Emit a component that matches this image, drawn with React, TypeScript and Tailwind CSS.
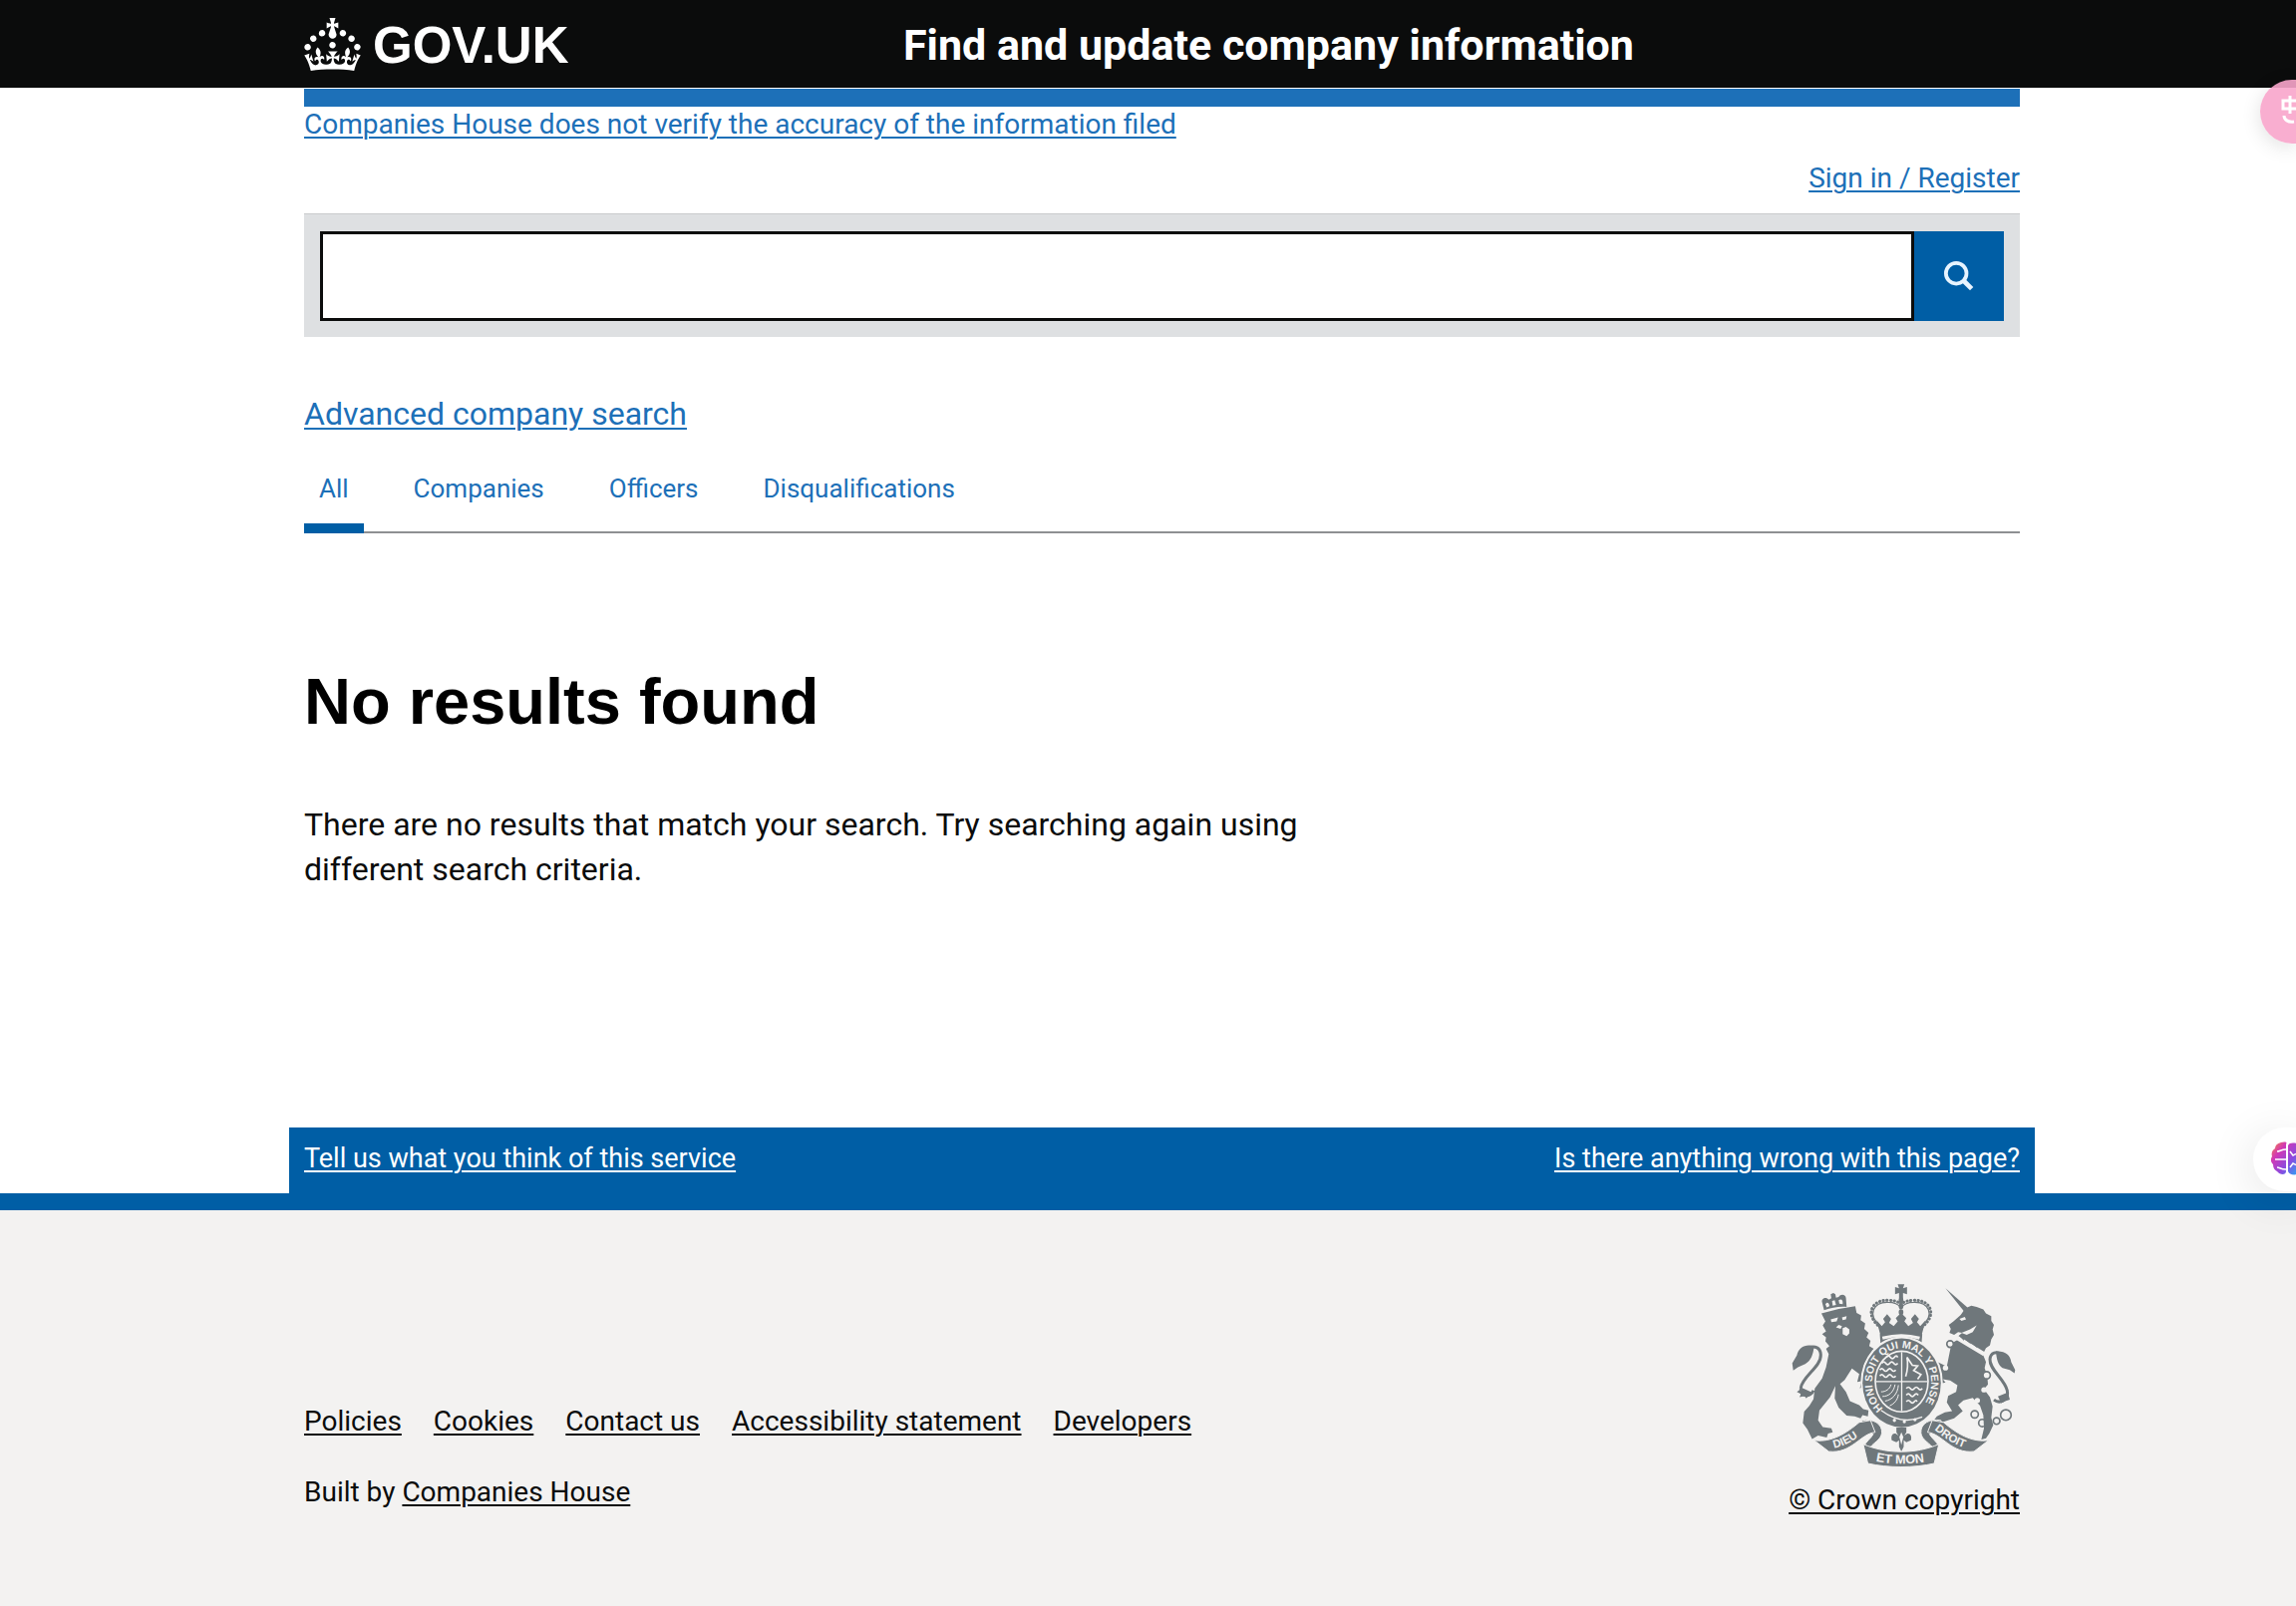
import type { ReactNode } from "react";

const tabs = ["All", "Companies", "Officers", "Disqualifications"];

const footerLinks = [
  "Policies",
  "Cookies",
  "Contact us",
  "Accessibility statement",
  "Developers",
];

/** Centred page column shared by the header, the main content and the footer. */
function Container({ children, className = "" }: { children: ReactNode; className?: string }) {
  return (
    <div className="pl-7">
      <div className={"mx-auto w-full max-w-[1721px] " + className}>{children}</div>
    </div>
  );
}

function CrownIcon() {
  return (
    <svg viewBox="0 0 32 30" className="h-[53px] w-[57px]" fill="currentColor" aria-hidden="true">
      <path d="M22.6 10.4c-1 .4-2-.1-2.4-1-.4-.9.1-2 1-2.4.9-.4 2 .1 2.4 1s-.1 2-1 2.4m-5.9 6.7c-.9.4-2-.1-2.4-1-.4-.9.1-2 1-2.4.9-.4 2 .1 2.4 1s-.1 2-1 2.4m10.8-3.7c-1 .4-2-.1-2.4-1-.4-.9.1-2 1-2.4.9-.4 2 .1 2.4 1s0 2-1 2.4m3.3 4.8c-1 .4-2-.1-2.4-1-.4-.9.1-2 1-2.4.9-.4 2 .1 2.4 1s-.1 2-1 2.4M17 4.7l2.3 1.2V2.5l-2.3.7-.2-.2.9-3h-3.4l.9 3-.2.2c-.1.1-2.3-.7-2.3-.7v3.4L15 4.7c.1.1.1.2.2.2l-1.3 4c-.1.2-.1.4-.1.6 0 1.1.8 2 1.9 2.2h.7c1-.2 1.9-1.1 1.9-2.1 0-.2 0-.4-.1-.6l-1.3-4c-.1-.2 0-.2.1-.3m-7.6 5.7c.9.4 2-.1 2.4-1 .4-.9-.1-2-1-2.4-.9-.4-2 .1-2.4 1s0 2 1 2.4m-5 3c.9.4 2-.1 2.4-1 .4-.9-.1-2-1-2.4-.9-.4-2 .1-2.4 1s.1 2 1 2.4m-3.2 4.8c.9.4 2-.1 2.4-1 .4-.9-.1-2-1-2.4-.9-.4-2 .1-2.4 1s0 2 1 2.4m14.8 11c4.4 0 8.6.3 12.3.8 1.1-4.5 2.4-7 3.7-8.8l-2.5-.9c.2 1.3.3 1.9 0 2.7-.4-.4-.8-1.1-1.1-2.3l-1.2 4c.7-.5 1.3-.8 2-.9-1.1 2.5-2.6 3.1-3.5 3-1.1-.2-1.7-1.2-1.5-2.1.3-1.2 1.5-1.5 2.1-.1 1.1-2.3-.8-3-2-2.3 1.9-1.9 2.1-3.5.6-5.6-2.1 1.6-2.1 3.2-1.2 5.5-1.2-1.4-3.2-.6-2.5 1.6.9-1.4 2.1-.5 1.9.8-.2 1.1-1.7 2.1-3.5 1.9-2.7-.2-2.9-2.1-2.9-3.6.7-.1 1.9.5 2.9 1.9l.4-4.3c-1.1 1.1-2.1 1.4-3.2 1.4.4-1.2 2.1-3 2.1-3h-5.4s1.7 1.9 2.1 3c-1.1 0-2.1-.2-3.2-1.4l.4 4.3c1-1.4 2.2-2 2.9-1.9-.1 1.5-.2 3.4-2.9 3.6-1.9.2-3.4-.8-3.5-1.9-.2-1.3 1-2.2 1.9-.8.7-2.3-1.2-3-2.5-1.6.9-2.2.9-3.9-1.2-5.5-1.5 2-1.3 3.7.6 5.6-1.2-.7-3.1 0-2 2.3.6-1.4 1.8-1.1 2.1.1.2.9-.3 1.9-1.5 2.1-.9.2-2.4-.5-3.5-3 .6 0 1.2.3 2 .9l-1.2-4c-.3 1.1-.7 1.9-1.1 2.3-.3-.8-.2-1.4 0-2.7l-2.9.9C1.3 23 2.6 25.5 3.7 30c3.7-.5 7.9-.8 12.3-.8" />
    </svg>
  );
}

/** Royal coat of arms: lion, unicorn, crowned garter and motto ribbon. */
function CoatOfArms() {
  return (
    <svg
      viewBox="80 48 676 556"
      className="h-[185px] w-[225px]"
      fill="#6f777b"
      role="img"
      aria-label="Royal coat of arms"
    >
      {/* lion */}
      <path d="M170 140 L222 126 L272 118 L276 138 L290 146 L288 160 L302 170 L299 186 L312 198 L306 212 L318 222 L314 238 L328 246 L316 262 L300 290 L300 312 L318 336 L306 344 L314 366 L298 358 L286 366 L290 344 L278 346 L284 322 L262 306 L240 340 L226 352 L244 376 L256 404 L284 416 L296 428 L312 432 L310 450 L294 446 L288 456 L270 450 L246 448 L222 424 L210 396 L212 358 L196 392 L164 432 L160 462 L174 482 L200 486 L204 498 L190 502 L186 514 L160 508 L142 518 L136 506 L128 490 L114 470 L118 436 L134 418 L146 398 L150 366 L172 336 L184 302 L192 262 L184 246 L194 238 L182 224 L184 212 L172 202 L184 194 L174 176 L182 164 Z" />
      <path
        d="M146 372c-8 22-42 20-38-8 4-34 62-64 60-100-1-22-18-27-34-22"
        fill="none"
        stroke="#6f777b"
        strokeWidth="9"
      />
      <path d="M148 238c-26-8-48 4-52 28l-14 24 3 22 14-10 22-10c18-10 24-28 27-54zM112 364l-16 12 12 6-4 10 16-4 4 8 18-18z" />
      <path d="M178 130l-6-24c-3-12 12-18 20-8l8-4-2-12 8-4 6 4 2 10 8-2c6-10 22-8 22 4l2 26c-24-2-44 2-68 10z" />
      <g fill="#f3f2f1">
        <path d="M182 112c4-8 12-6 12 6l-8 4zM202 102l8-2 4 14-10 2zM222 100c8-6 14 0 12 12l-10-2z" />
        <path d="M198 158l22-6-4 12-16 2zM232 152l14-4-2 10-10 2zM234 184l10-4 10 8 0 12-8 8-12-6z" />
        <path d="M222 174l10 4-4 8-14-4z" />
      </g>

      {/* unicorn */}
      <path d="M544 64l66 58-10 12z" />
      <path d="M604 124l18-8 16 4 20 8 8 12 16 8 0 14 8 12-4 14 4 16-8 14-4 18-12 8-8 16-60-34-18-16 14-12-12-2-12 8-14-6 4-12-6-12 14-10 22-20z" />
      <path d="M562 230l24-14 72 50 8 20-4 18 8 24 2 26-12 14 18 24 8 28-4 34 6 22-12 26-10 14-14 4 8-34-2-40-10-28-22-24-28 8-16 14 14 18-26 22-30 10-34 0 12-16 24-12 22-4-16-26 4-20 24-12 4-20-22-14-22-4 8 10-18 4-24-18-2-22 10 4 6 8 14-6-22-20-18-6-10 6 4-14 22-4 22 10 20 10z" />
      <path
        d="M690 400c18 14 46 0 40-28-8-36-54-62-52-94 2-22 20-24 34-16"
        fill="none"
        stroke="#6f777b"
        strokeWidth="9"
      />
      <path d="M696 254c28-2 44 12 46 32l12 24-2 10-14-10-22-6c-14-8-18-26-20-50zM702 390l10 20 12-6 14-4-6-22z" />
      <g fill="none" stroke="#6f777b" strokeWidth="5">
        <circle cx="558" cy="232" r="10" fill="#f3f2f1" />
        <circle cx="668" cy="326" r="11" fill="#f3f2f1" />
        <circle cx="632" cy="444" r="11" />
        <circle cx="655" cy="470" r="11" />
        <circle cx="698" cy="464" r="10" />
        <circle cx="726" cy="446" r="16" />
      </g>
      <g fill="#f3f2f1">
        <circle cx="640" cy="402" r="8" />
        <circle cx="660" cy="370" r="8" />
        <circle cx="544" cy="304" r="8" />
        <path d="M580 206l82 50-4 12-84-50zM586 156l16-6 4 8-14 4zM592 198l26-10 20-12-12 20-18 8z" />
      </g>
      <path d="M588 210l10-2 2 14zM606 220l10-6 4 18zM626 232l10-6 4 18z" />

      {/* crown */}
      <path d="M400 52h20l-4 12 12-4v22l-12-4v20h-12V78l-12 4V60l12 4z" />
      <g fill="none" stroke="#6f777b" strokeLinecap="round">
        <path
          d="M348 182c-50-38-26-84 22-82 18 0 32 4 40 12 8-8 22-12 40-12 48-2 72 44 22 82"
          strokeWidth="9"
          strokeDasharray="1 10"
        />
        <path
          d="M350 180c-46-36-22-76 22-74 18 0 30 6 38 16 8-10 20-16 38-16 44-2 68 38 22 74"
          strokeWidth="4"
        />
        <path d="M410 98v66" strokeWidth="14" strokeDasharray="4 14" />
      </g>
      <path d="M336 160l16 18 10-12-6-10 12-14 12 14-6 12 14 10 12-14-6-10 16-16 16 16-6 10 12 14 14-10-6-12 12-14 12 14-6 10 10 12 16-18-12 46c-40-10-88-10-124 0z" />
      <path d="M346 202c40-10 88-10 128 0l-2 26H348z" />
      <path d="M354 214c38-10 76-10 112 0" fill="none" stroke="#f3f2f1" strokeWidth="9" />

      {/* garter */}
      <ellipse cx="412" cy="349" rx="124" ry="140" fill="#f3f2f1" />
      <ellipse cx="412" cy="349" rx="118" ry="134" />
      <ellipse cx="412" cy="345" rx="82" ry="94" fill="#f3f2f1" />
      <ellipse cx="412" cy="345" rx="77" ry="89" />
      <g stroke="#f3f2f1" fill="none" strokeWidth="4">
        <path d="M412 256v178M335 345h154" />
        <path
          d="M352 290q6-8 12 0t12 0 12 0 12 0M346 310q6-8 12 0t12 0 12 0 12 0M346 328q6-8 12 0t12 0 12 0 12 0M366 272q6-8 12 0t12 0 10 0M426 366q6-8 12 0t12 0 12 0 12 0M426 386q6-8 12 0t12 0 12 0M426 406q6-8 12 0t12 0 8 0"
          strokeWidth="5"
        />
        <path d="M350 376c14 0 26-8 30-22M354 390c20 0 34-14 38-36M362 404c22-4 38-22 40-48M376 418c14-6 24-18 26-34" strokeWidth="3" />
        <path d="M424 330c6-20 8-36 4-58l16 24 16 2-12 14 22 12-10 14" strokeWidth="5" />
        <path d="M350 432c40 30 84 36 124 20" strokeWidth="4" />
      </g>
      <g fill="#f3f2f1">
        <circle cx="390" cy="462" r="5" />
        <circle cx="420" cy="466" r="5" />
        <circle cx="452" cy="460" r="5" />
      </g>
      <path id="garter-motto" d="M356 426A89 102 0 1 1 470 424" fill="none" />
      <text
        fill="#f3f2f1"
        fontFamily="'Liberation Sans', sans-serif"
        fontWeight="700"
        fontSize="32"
      >
        <textPath href="#garter-motto">HONI SOIT QUI MAL Y PENSE</textPath>
      </text>

      {/* fleur-de-lis */}
      <path d="M396 484h30v14l-6 10c14-14 24-2 20 14l-14 6-8-6v20l-7 14-7-14v-20l-8 6-14-6c-4-16 6-28 20-14l-6-10z" />
      <path d="M411 498l6 14-6 24-6-24z" fill="#f3f2f1" />

      {/* ribbon */}
      <g stroke="#f3f2f1" strokeWidth="3">
        <path d="M292 462c34-6 62 10 60 38-2 22-28 30-40 50l-12-12c4-12 18-20 26-34-10-14-24-12-42-2z" />
        <path d="M530 462c-34-6-62 10-60 38 2 22 28 30 40 50l12-12c-4-12-18-20-26-34 10-14 24-12 42-2z" />
        <path d="M148 522c52 8 98-22 136-54l34-6 14 36c-44 4-72 66-140 58z" />
        <path d="M674 522c-52 8-98-22-136-54l-34-6-14 36c44 4 72 66 140 58z" />
        <path d="M296 534c72 30 158 30 228 0l-14 58c-60 14-140 14-200 0z" />
      </g>
      <g fill="none">
        <path id="ribbon-left" d="M208 546c40-8 72-32 104-58" />
        <path id="ribbon-mid" d="M334 585q78 16 160 0" />
        <path id="ribbon-right" d="M510 490c32 26 62 48 108 60" />
      </g>
      <g
        fill="#f3f2f1"
        fontFamily="'Liberation Sans', sans-serif"
        fontWeight="700"
        fontSize="34"
      >
        <text>
          <textPath href="#ribbon-left">DIEU</textPath>
        </text>
        <text fontSize="38">
          <textPath href="#ribbon-mid">ET MON</textPath>
        </text>
        <text>
          <textPath href="#ribbon-right">DROIT</textPath>
        </text>
      </g>
    </svg>
  );
}

/** Half-hidden browser extension buttons stuck to the right window edge. */
function SideWidgets() {
  return (
    <>
      <button
        type="button"
        aria-label="Translate"
        className="fixed top-20 right-0 h-16 w-9 rounded-l-full bg-[#f8a5cb]/90 shadow-[0_4px_20px_rgba(0,0,0,0.12)]"
      >
        <svg
          viewBox="0 0 36 64"
          className="h-16 w-9"
          fill="none"
          stroke="white"
          strokeWidth="3"
          aria-hidden="true"
        >
          <path d="M37 21H23v8h14M30 16v18M24 36c0 4 4 7 10 6" />
        </svg>
      </button>
      <button
        type="button"
        aria-label="Assistant"
        className="fixed top-[1131px] right-0 h-16 w-[43px] rounded-l-full bg-white shadow-[0_8px_48px_rgba(0,0,0,0.12)]"
      >
        <svg viewBox="0 0 43 64" className="h-16 w-[43px]" aria-hidden="true">
          <defs>
            <linearGradient id="brain" x1="0" y1="0" x2="1" y2="1">
              <stop offset="0" stopColor="#f98a3c" />
              <stop offset="0.3" stopColor="#d238b4" />
              <stop offset="0.65" stopColor="#8a4be0" />
              <stop offset="1" stopColor="#2aa5f5" />
            </linearGradient>
          </defs>
          <path
            d="M33 17c2-3-2-3-5-2-4 1-6 3-6 6-3 2-4 5-3 8-2 3-1 6 1 8 0 4 2 6 4 7 3 4 9 4 9 0zM35 18c1-3 5-3 10-2v31c-5 1-9 0-10-3z"
            fill="url(#brain)"
          />
          <path
            d="M22 32h11M24 24c3 0 4-2 9-2M24 40c3 0 3 2 9 2M37 24l3 4 4-2M37 40l3-4 4 2"
            stroke="white"
            strokeWidth="1.5"
            fill="none"
          />
        </svg>
      </button>
    </>
  );
}

export default function App() {
  return (
    <div className="overflow-x-hidden bg-white font-[Roboto,sans-serif] text-[28px] leading-9 text-[#0b0c0c]">
      <header className="bg-[#0b0c0c] text-white">
        <Container className="flex h-22 items-center">
          <a href="#" className="flex w-[601px] items-center gap-3">
            <CrownIcon />
            <span className="pt-0.5 font-['Liberation_Sans',sans-serif] text-[51px] leading-none font-bold">
              GOV.UK
            </span>
          </a>
          <a href="#" className="pt-0.5 text-[43px] leading-none font-bold">
            Find and update company information
          </a>
        </Container>
      </header>

      <main>
        <Container>
          <div className="mt-px h-[18px] bg-[#1d70b8]" />
          <a href="#" className="block w-fit text-[#1d70b8] underline decoration-2 underline-offset-3">
            Companies House does not verify the accuracy of the information filed
          </a>
          <div className="mt-[18px] flex justify-end">
            <a href="#" className="text-[#1d70b8] underline decoration-2 underline-offset-3">
              Sign in / Register
            </a>
          </div>

          <form
            role="search"
            className="mt-[17px] flex border-t border-[#c9cbcc] bg-[#dee0e2] px-4 pt-[17px] pb-4"
            onSubmit={(e) => e.preventDefault()}
          >
            <input
              type="search"
              aria-label="Search for companies or officers"
              className="h-[90px] min-w-0 flex-1 appearance-none border-[3px] border-[#0b0c0c] bg-white px-3 outline-none"
            />
            <button
              type="submit"
              aria-label="Search"
              className="flex size-[90px] items-center justify-center bg-[#005ea5] text-[#e8f4ff]"
            >
              <svg
                viewBox="0 0 32 32"
                className="size-[30px]"
                fill="none"
                stroke="currentColor"
                strokeWidth="4"
                aria-hidden="true"
              >
                <circle cx="13" cy="13" r="11" />
                <path d="M20.500 20.500l9 9" strokeWidth="5" />
              </svg>
            </button>
          </form>

          <a
            href="#"
            className="mt-[55px] block w-fit text-[32px] leading-[45px] text-[#1d70b8] underline decoration-2 underline-offset-3"
          >
            Advanced company search
          </a>

          <nav className="mt-[34px] flex gap-[35px] border-b-2 border-[#8e9092] text-[26px]">
            {tabs.map((tab, i) => (
              <a
                key={tab}
                href="#"
                className={
                  "-mb-0.5 border-b-[10px] px-[15px] pb-[17px] text-[#1d70b8] " +
                  (i === 0 ? "border-[#005ea5]" : "border-transparent")
                }
              >
                {tab}
              </a>
            ))}
          </nav>

          <h1 className="mt-[133px] font-['Liberation_Sans',sans-serif] text-[65px] leading-18 font-bold text-black">
            No results found
          </h1>
          <p className="mt-[65px] max-w-3/5 text-[32px] leading-[45px]">
            There are no results that match your search. Try searching again using different search
            criteria.
          </p>
        </Container>

        <div className="mt-[236px]">
          <Container>
            <div className="-mx-[15px] flex justify-between bg-[#005ea5] px-[15px] pt-[13px] pb-[17px] text-[27px] text-white">
              <a href="#" className="underline decoration-2 underline-offset-3">
                Tell us what you think of this service
              </a>
              <a href="#" className="underline decoration-2 underline-offset-3">
                Is there anything wrong with this page?
              </a>
            </div>
          </Container>
        </div>
      </main>

      <footer className="border-t-[17px] border-[#005ea5] bg-[#f3f2f1] pt-[73px] pb-22">
        <Container className="flex items-end justify-between">
          <div className="pb-2">
            <ul className="flex gap-8">
              {footerLinks.map((link) => (
                <li key={link}>
                  <a href="#" className="underline decoration-2 underline-offset-3">
                    {link}
                  </a>
                </li>
              ))}
            </ul>
            <p className="mt-[35px]">
              Built by{" "}
              <a href="#" className="underline decoration-2 underline-offset-3">
                Companies House
              </a>
            </p>
          </div>
          <div className="flex flex-col items-end gap-[15px]">
            <div className="pr-1">
              <CoatOfArms />
            </div>
            <a href="#" className="underline decoration-2 underline-offset-3">
              © Crown copyright
            </a>
          </div>
        </Container>
      </footer>

      <SideWidgets />
    </div>
  );
}
